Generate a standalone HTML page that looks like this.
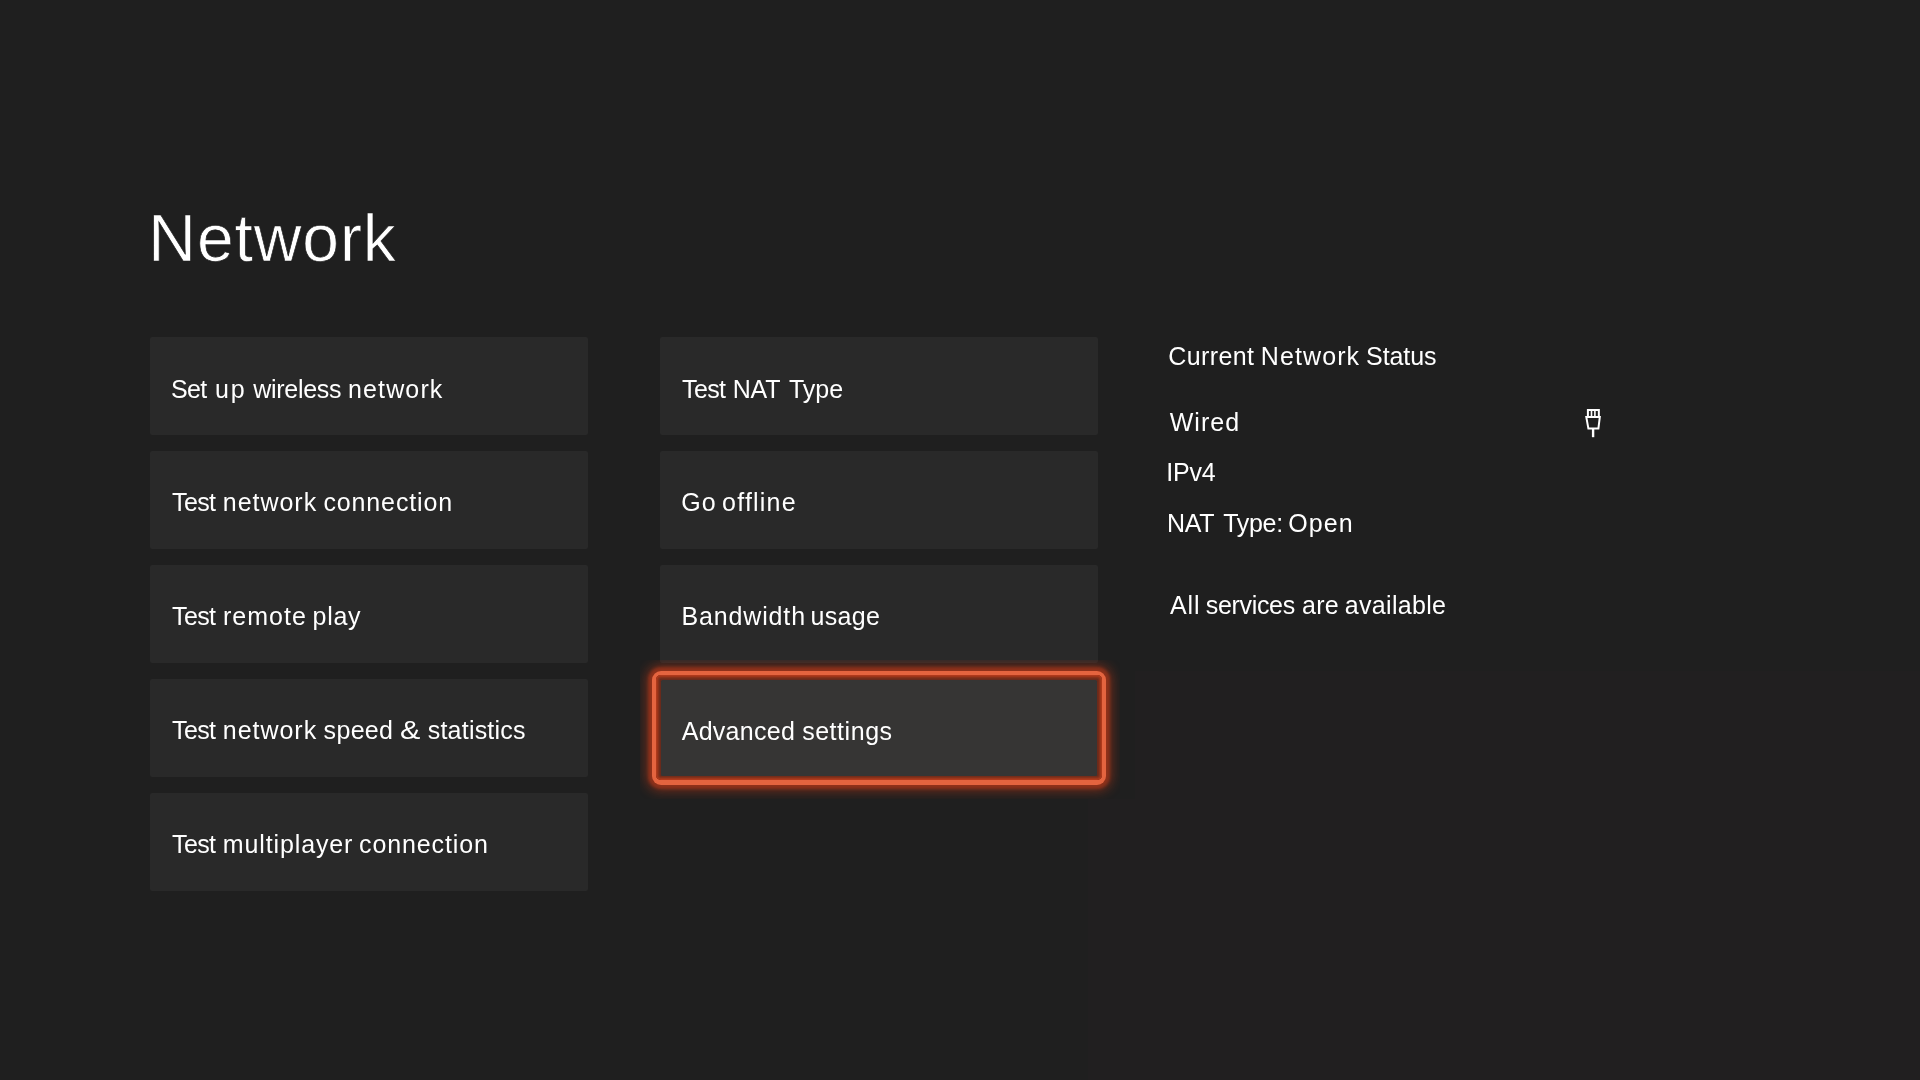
<!DOCTYPE html>
<html lang="en">
<head>
<meta charset="utf-8">
<title>Network</title>
<style>
html,body{margin:0;padding:0;}
body{width:1920px;height:1080px;overflow:hidden;background:#1f1f1f;position:relative;
  font-family:"Liberation Sans",sans-serif;color:#fff;}
.tile{position:absolute;width:438.4px;height:97.4px;background:#292929;border-radius:2px;}
.fclip{position:absolute;left:639.5px;top:659.6px;width:480.5px;height:139.4px;overflow:hidden;}
.fo{position:absolute;left:12px;top:11.4px;width:454.5px;height:114px;border-radius:9px;background:#e4643f;
  box-shadow:0 0 3px 3.5px rgba(225,65,25,.36),0 0 12px 5.5px rgba(225,65,25,.42);}
.fi{position:absolute;left:4.5px;top:4.5px;right:4.5px;bottom:4.5px;border-radius:5px;background:#6a2a1b;
  box-shadow:inset 0 0 0 1.2px #ae3a1c,inset 0 0 0 2.3px #98341a,inset 0 0 0 3.4px #80301b;}
.ff{position:absolute;left:9px;top:9px;right:9px;bottom:9px;border-radius:1.5px;background:#363534;}
.t{position:absolute;white-space:nowrap;color:#fff;will-change:transform;width:420px;}
.t span{position:absolute;top:0;white-space:nowrap;}
.t.title{color:#fff;-webkit-text-stroke:0.7px #1f1f1f;}
svg.eth{position:absolute;left:1583px;top:407px;}
</style>
</head>
<body>
<div style="position:absolute;left:1135px;top:671px;right:0;height:129px;background:#211f20"></div>
<div style="position:absolute;left:1088px;top:799px;right:0;bottom:0;background:#211f20"></div>
<div class="tile" style="left:150px;top:337.3px"></div>
<div class="tile" style="left:150px;top:451.3px"></div>
<div class="tile" style="left:150px;top:565.3px"></div>
<div class="tile" style="left:150px;top:679.3px"></div>
<div class="tile" style="left:150px;top:793.3px"></div>
<div class="tile" style="left:659.6px;top:337.3px;width:438px"></div>
<div class="tile" style="left:659.6px;top:451.3px;width:438px"></div>
<div class="tile" style="left:659.6px;top:565.3px;width:438px"></div>
<div class="fclip"><div class="fo"><div class="fi"></div><div class="ff"></div></div></div>
<div class="t title" style="left:150.25px;top:191.80px;font-size:66px;line-height:92px;height:92px"><span style="left:-1.66px;letter-spacing:0.896px">Network</span></div>
<div class="t" style="left:168.50px;top:371.60px;font-size:25px;line-height:35px;height:35px"><span style="left:2.08px;letter-spacing:-0.703px">Set</span> <span style="left:45.91px;letter-spacing:1.909px">up</span> <span style="left:84.29px;letter-spacing:-0.307px">wireless</span> <span style="left:179.00px;letter-spacing:1.136px">network</span></div>
<div class="t" style="left:168.50px;top:485.40px;font-size:25px;line-height:35px;height:35px"><span style="left:3.00px;letter-spacing:-0.621px">Test</span> <span style="left:53.86px;letter-spacing:0.957px">network</span> <span style="left:154.43px;letter-spacing:0.868px">connection</span></div>
<div class="t" style="left:168.50px;top:599.20px;font-size:25px;line-height:35px;height:35px"><span style="left:3.00px;letter-spacing:-0.621px">Test</span> <span style="left:53.99px;letter-spacing:1.011px">remote</span> <span style="left:143.53px;letter-spacing:0.727px">play</span></div>
<div class="t" style="left:168.50px;top:713.30px;font-size:25px;line-height:35px;height:35px"><span style="left:3.00px;letter-spacing:-0.621px">Test</span> <span style="left:53.86px;letter-spacing:0.957px">network</span> <span style="left:154.60px;letter-spacing:0.320px">speed</span> <span style="left:230.51px;letter-spacing:0.000px;transform:scaleX(1.221);transform-origin:0 50%">&amp;</span> <span style="left:258.74px;letter-spacing:0.212px">statistics</span></div>
<div class="t" style="left:168.50px;top:827.20px;font-size:25px;line-height:35px;height:35px"><span style="left:3.00px;letter-spacing:-0.610px">Test</span> <span style="left:53.84px;letter-spacing:0.870px">multiplayer</span> <span style="left:190.00px;letter-spacing:0.882px">connection</span></div>
<div class="t" style="left:678.50px;top:371.60px;font-size:25px;line-height:35px;height:35px"><span style="left:3.00px;letter-spacing:-0.610px">Test</span> <span style="left:53.87px;letter-spacing:-0.294px">NAT</span> <span style="left:110.00px;letter-spacing:-0.027px">Type</span></div>
<div class="t" style="left:678.50px;top:485.40px;font-size:25px;line-height:35px;height:35px"><span style="left:2.31px;letter-spacing:1.092px">Go</span> <span style="left:43.11px;letter-spacing:1.194px">offline</span></div>
<div class="t" style="left:679.30px;top:599.20px;font-size:25px;line-height:35px;height:35px"><span style="left:2.38px;letter-spacing:0.868px">Bandwidth</span> <span style="left:131.55px;letter-spacing:0.302px">usage</span></div>
<div class="t" style="left:677.90px;top:713.50px;font-size:25px;line-height:35px;height:35px"><span style="left:3.71px;letter-spacing:0.270px">Advanced</span> <span style="left:124.14px;letter-spacing:0.543px">settings</span></div>
<div class="t" style="left:1165.50px;top:339.10px;font-size:25px;line-height:35px;height:35px"><span style="left:2.19px;letter-spacing:0.411px">Current</span> <span style="left:94.87px;letter-spacing:1.094px">Network</span> <span style="left:200.08px;letter-spacing:-0.105px">Status</span></div>
<div class="t" style="left:1166.00px;top:405.10px;font-size:25px;line-height:35px;height:35px"><span style="left:3.72px;letter-spacing:1.015px">Wired</span></div>
<div class="t" style="left:1164.75px;top:454.60px;font-size:25px;line-height:35px;height:35px"><span style="left:1.37px;letter-spacing:-0.265px">IPv4</span></div>
<div class="t" style="left:1164.90px;top:505.85px;font-size:25px;line-height:35px;height:35px"><span style="left:1.96px;letter-spacing:-0.276px">NAT</span> <span style="left:58.26px;letter-spacing:-0.322px">Type:</span> <span style="left:123.34px;letter-spacing:1.084px">Open</span></div>
<div class="t" style="left:1166.20px;top:588.10px;font-size:25px;line-height:35px;height:35px"><span style="left:3.95px;letter-spacing:0.903px">All</span> <span style="left:39.72px;letter-spacing:-0.316px">services</span> <span style="left:135.99px;letter-spacing:0.256px">are</span> <span style="left:178.73px;letter-spacing:0.326px">available</span></div>
<svg class="eth" width="20" height="32" viewBox="0 0 20 32" fill="none" stroke="#fff" stroke-width="2">
<path d="M4.9 9.1V2.9H15.85V9.1"/>
<path d="M3.3 10.1H16.8L15.4 21.6H5.4Z" stroke-linejoin="miter"/>
<path d="M10.1 21.6V30.2" stroke-width="2.4"/>
<path d="M8.5 3.9V9.2M11.9 3.9V9.2" stroke-width="1.6"/>
</svg>
</body>
</html>
